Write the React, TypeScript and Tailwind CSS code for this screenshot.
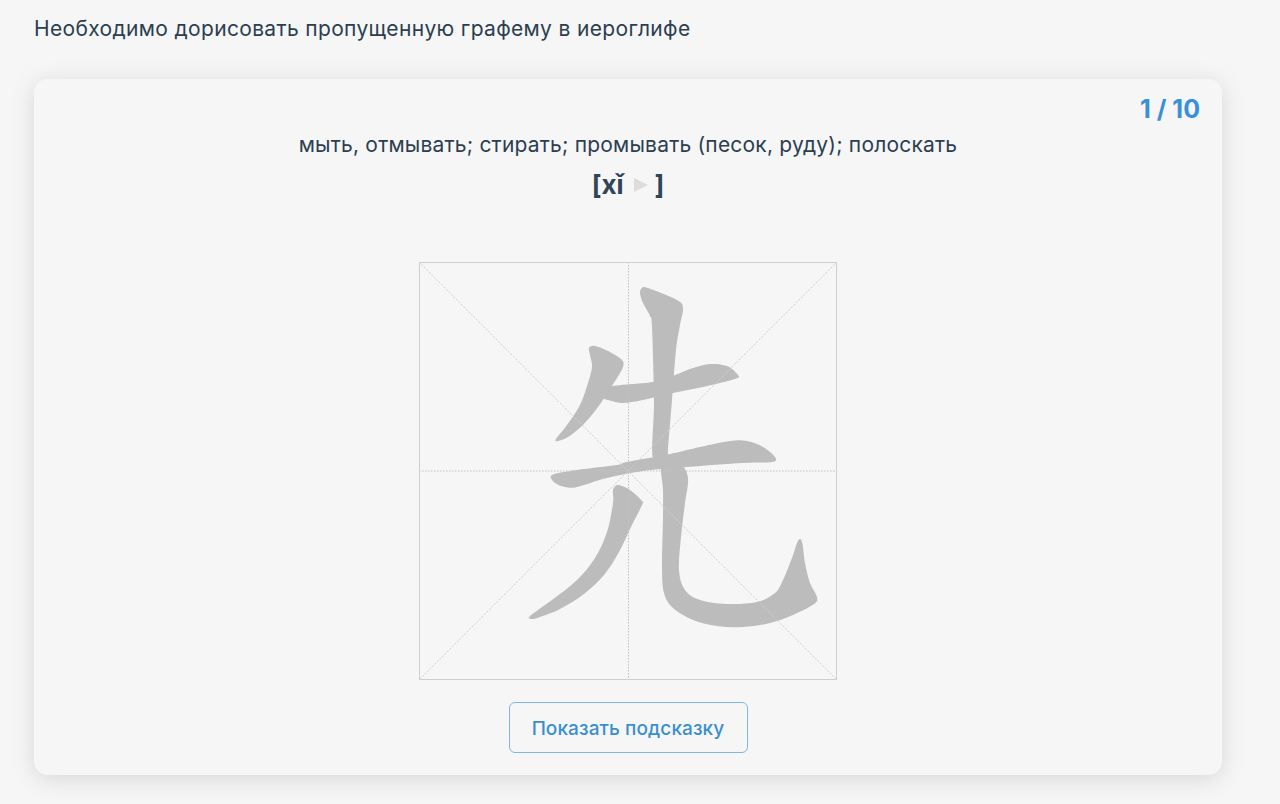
type P = [number, number];

const strokes: P[][] = [
  [[589,348],[595,346],[610,352],[622,360],[623,367],[617,378],[608,392],[598,407],[583,425],[568,437],[558,441],[556,439],[567,425],[580,405],[588,383],[592,367],[590,355]],
  [[608,387],[653,382],[675,375],[693,368],[710,364],[727,366],[738,375],[735,379],[703,387],[673,393],[643,400],[623,403],[612,401],[602,397]],
  [[640,293],[642,288],[648,288],[677,300],[683,308],[680,325],[676,350],[672,400],[668,450],[668,458],[653,458],[654,400],[652,327],[650,316],[643,303]],
  [[552,475],[577,470],[617,465],[627,462],[670,454],[700,447],[730,441],[747,441],[763,447],[775,457],[772,462],[743,463],[687,467],[643,471],[607,478],[577,487],[565,487],[555,483]],
  [[613,490],[618,485],[630,490],[642,501],[642,505],[631,527],[619,552],[604,575],[584,594],[560,609],[540,617],[532,619],[530,616],[552,600],[577,580],[595,558],[607,532],[613,503]],
  [[662,464],[680,464],[688,478],[685,503],[681,537],[679,570],[685,590],[700,600],[727,604],[757,602],[775,593],[783,580],[792,558],[798,541],[802,542],[805,563],[810,583],[817,597],[814,604],[793,615],[770,623],[743,627],[717,626],[693,620],[673,608],[664,593],[662,567],[663,517],[663,490]],
];

function smooth(pts: P[]) {
  const n = pts.length;
  const t = 1 / 6;
  let d = `M${pts[0][0]} ${pts[0][1]}`;
  for (let i = 0; i < n; i++) {
    const p0 = pts[(i - 1 + n) % n];
    const p1 = pts[i];
    const p2 = pts[(i + 1) % n];
    const p3 = pts[(i + 2) % n];
    d += `C${p1[0] + (p2[0] - p0[0]) * t} ${p1[1] + (p2[1] - p0[1]) * t} ${p2[0] - (p3[0] - p1[0]) * t} ${p2[1] - (p3[1] - p1[1]) * t} ${p2[0]} ${p2[1]}`;
  }
  return d + "Z";
}

function Hanzi() {
  return (
    <svg viewBox="419 262 418 418" className="block h-[418px] w-[418px]">
      {strokes.map((s, i) => (
        <path key={i} d={smooth(s)} fill="#bcbcbc" />
      ))}
      <g fill="none">
        <line x1="419" y1="262" x2="837" y2="680" stroke="#cfcfcf" strokeWidth="1" strokeDasharray="2 1.5" />
        <line x1="837" y1="262" x2="419" y2="680" stroke="#cfcfcf" strokeWidth="1" strokeDasharray="2 1.5" />
        <line x1="628.5" y1="262" x2="628.5" y2="680" stroke="#c0c0c0" strokeWidth="1" strokeDasharray="1.5 1.5" />
        <line x1="419" y1="471" x2="837" y2="471" stroke="#c0c0c0" strokeWidth="1" strokeDasharray="1.5 1.5" />
        <rect x="419.5" y="262.5" width="417" height="417" stroke="#cfcfcf" strokeWidth="1" />
      </g>
    </svg>
  );
}

export default function App() {
  return (
    <div className="h-[804px] overflow-hidden bg-[#f6f6f7] pl-[34px] pr-[58px] pt-[15px] font-['Inter','Liberation_Sans',sans-serif] text-[#2c3e50]">
      <p className="h-[64px] text-[21px] leading-[28px] tracking-[0.34px]">Необходимо дорисовать пропущенную графему в иероглифе</p>
      <div className="relative flex h-[696px] flex-col items-center rounded-[14px] bg-[#f6f6f7] pt-[52px] shadow-[0_4px_24px_rgba(0,0,0,0.13)]">
        <div className="absolute right-[22px] top-[15px] text-[25px] font-bold leading-[30px] text-[#3a8fdb]">1 / 10</div>
        <p className="text-[21px] leading-[28px] tracking-[0.2px]">мыть, отмывать; стирать; промывать (песок, руду); полоскать</p>
        <div className="mt-[12px] flex h-[28px] items-center text-[26px] font-bold leading-[28px] text-[#2f4558]">
          <span>[xǐ</span>
          <svg viewBox="0 0 14 14" className="ml-[10px] mr-[7px] h-[14px] w-[14px]">
            <path d="M0 0L14 7L0 14Z" fill="#dcdcdc" />
          </svg>
          <span>]</span>
        </div>
        <div className="mt-[63px]">
          <Hanzi />
        </div>
        <button className="mt-[22px] h-[51px] w-[239px] rounded-[6px] border border-[#7fb6e3] pt-[3px] text-[19px] font-medium tracking-[0.1px] text-[#3a8fd0]">
          Показать подсказку
        </button>
      </div>
    </div>
  );
}
